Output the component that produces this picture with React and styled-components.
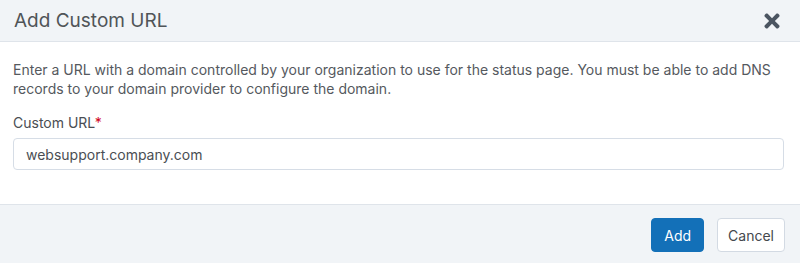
import styled, { createGlobalStyle } from "styled-components";
import { FaTimes } from "react-icons/fa";

const Global = createGlobalStyle`
  body {
    margin: 0;
    background: #fff;
    font-family: Inter, "Open Sans", sans-serif;
    color: #555b61;
  }
`;

const Modal = styled.div`
  width: 800px;
  height: 263px;
  display: flex;
  flex-direction: column;
  background: #fff;
`;

const Header = styled.div`
  height: 41px;
  display: flex;
  align-items: center;
  justify-content: space-between;
  padding: 0 17px 0 14px;
  background: #f1f4f7;
  border-bottom: 1px solid #dfe4ea;
`;

const Title = styled.h2`
  margin: 0;
  font-size: 19px;
  font-weight: 400;
  color: #505458;
`;

const Close = styled.button`
  display: flex;
  padding: 0;
  border: 0;
  background: none;
  color: #4b5561;
  cursor: pointer;
`;

const Body = styled.div`
  padding: 18px 16px 34px 13px;
  border-bottom: 1px solid #dfe4ea;
`;

const Text = styled.p`
  margin: 0;
  font-size: 14px;
  line-height: 19px;
  color: #55595e;
`;

const Label = styled.label`
  display: block;
  margin: 15px 0 6px;
  font-size: 14px;
  line-height: 19px;
  color: #4a4e53;

  span {
    color: #d0021b;
  }
`;

const Input = styled.input`
  box-sizing: border-box;
  width: 100%;
  height: 32px;
  padding: 0 12px;
  border: 1px solid #d6dde6;
  border-radius: 4px;
  font-family: inherit;
  font-size: 14px;
  color: #4a4e53;
  outline: none;
`;

const Footer = styled.div`
  flex: 1;
  display: flex;
  justify-content: flex-end;
  align-items: flex-start;
  gap: 13px;
  padding: 13px 15px 0;
  background: #f1f4f7;
`;

const Button = styled.button`
  height: 34px;
  padding: 0 ${(props) => (props.primary ? "12px" : "10px")};
  border-radius: 4px;
  border: 1px solid ${(props) => (props.primary ? "#1370b8" : "#d3dae3")};
  background: ${(props) => (props.primary ? "#1370b8" : "#fff")};
  color: ${(props) => (props.primary ? "#fff" : "#44484d")};
  font-family: inherit;
  font-size: 14px;
  cursor: pointer;
`;

const App = () => {
  return (
    <Modal>
      <Global />
      <Header>
        <Title>Add Custom URL</Title>
        <Close aria-label="Close">
          <FaTimes size={22} />
        </Close>
      </Header>
      <Body>
        <Text>
          Enter a URL with a domain controlled by your organization to use for the status page. You must be able to add
          DNS records to your domain provider to configure the domain.
        </Text>
        <Label>
          Custom URL<span>*</span>
        </Label>
        <Input defaultValue="websupport.company.com" />
      </Body>
      <Footer>
        <Button primary>Add</Button>
        <Button>Cancel</Button>
      </Footer>
    </Modal>
  );
};

export default App;
